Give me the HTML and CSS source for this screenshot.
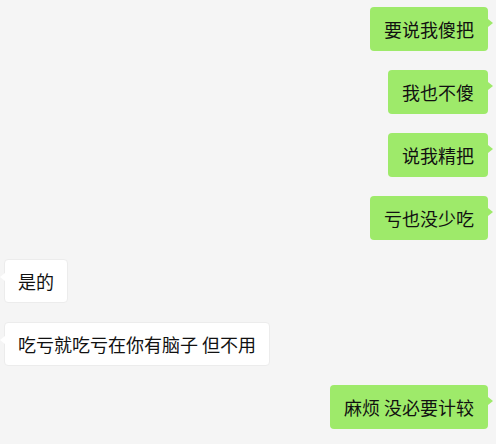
FILE: index.html
```html
<!DOCTYPE html>
<html lang="zh-CN">
<head>
    <meta charset="UTF-8">
    <meta name="viewport" content="width=device-width, initial-scale=1.0">
    <title>聊天记录</title>
    <link rel="stylesheet" href="styles.css">
</head>
<body>

    <div class="chat">
        <div class="row mine"><div class="bubble">要说我傻把</div></div>
        <div class="row mine"><div class="bubble">我也不傻</div></div>
        <div class="row mine"><div class="bubble">说我精把</div></div>
        <div class="row mine"><div class="bubble">亏也没少吃</div></div>
        <div class="row theirs"><div class="bubble">是的</div></div>
        <div class="row theirs"><div class="bubble">吃亏就吃亏在你有脑子 但不用</div></div>
        <div class="row mine"><div class="bubble">麻烦 没必要计较</div></div>
    </div>

</body>
</html>
```

FILE: styles.css
```css
body {
    margin: 0;
    padding: 0;
    background-color: #f5f5f5;
    font-family: "Noto Sans CJK SC", "Noto Sans", sans-serif;
}
.chat {
    display: flex;
    flex-direction: column;
    gap: 19px;
    padding: 7px 8px 0 4px;
}
.row {
    display: flex;
}
.row.mine {
    justify-content: flex-end;
}
.row.theirs {
    justify-content: flex-start;
}
.bubble {
    position: relative;
    box-sizing: border-box;
    height: 44px;
    padding: 0 14px;
    font-size: 18px;
    line-height: 44px;
    color: #111111;
    border-radius: 4px;
    white-space: nowrap;
}
.mine .bubble {
    background-color: #9eea6a;
}
.theirs .bubble {
    background-color: #ffffff;
    border: 1px solid #ececec;
    padding: 0 13px;
    line-height: 42px;
}
/* little arrows pointing at the speaker */
.mine .bubble::after {
    content: "";
    position: absolute;
    right: -5px;
    top: 12px;
    border-left: 5px solid #9eea6a;
    border-top: 4px solid transparent;
    border-bottom: 4px solid transparent;
}
.theirs .bubble::after {
    content: "";
    position: absolute;
    left: -5px;
    top: 13px;
    border-right: 5px solid #ffffff;
    border-top: 4px solid transparent;
    border-bottom: 4px solid transparent;
}
```
